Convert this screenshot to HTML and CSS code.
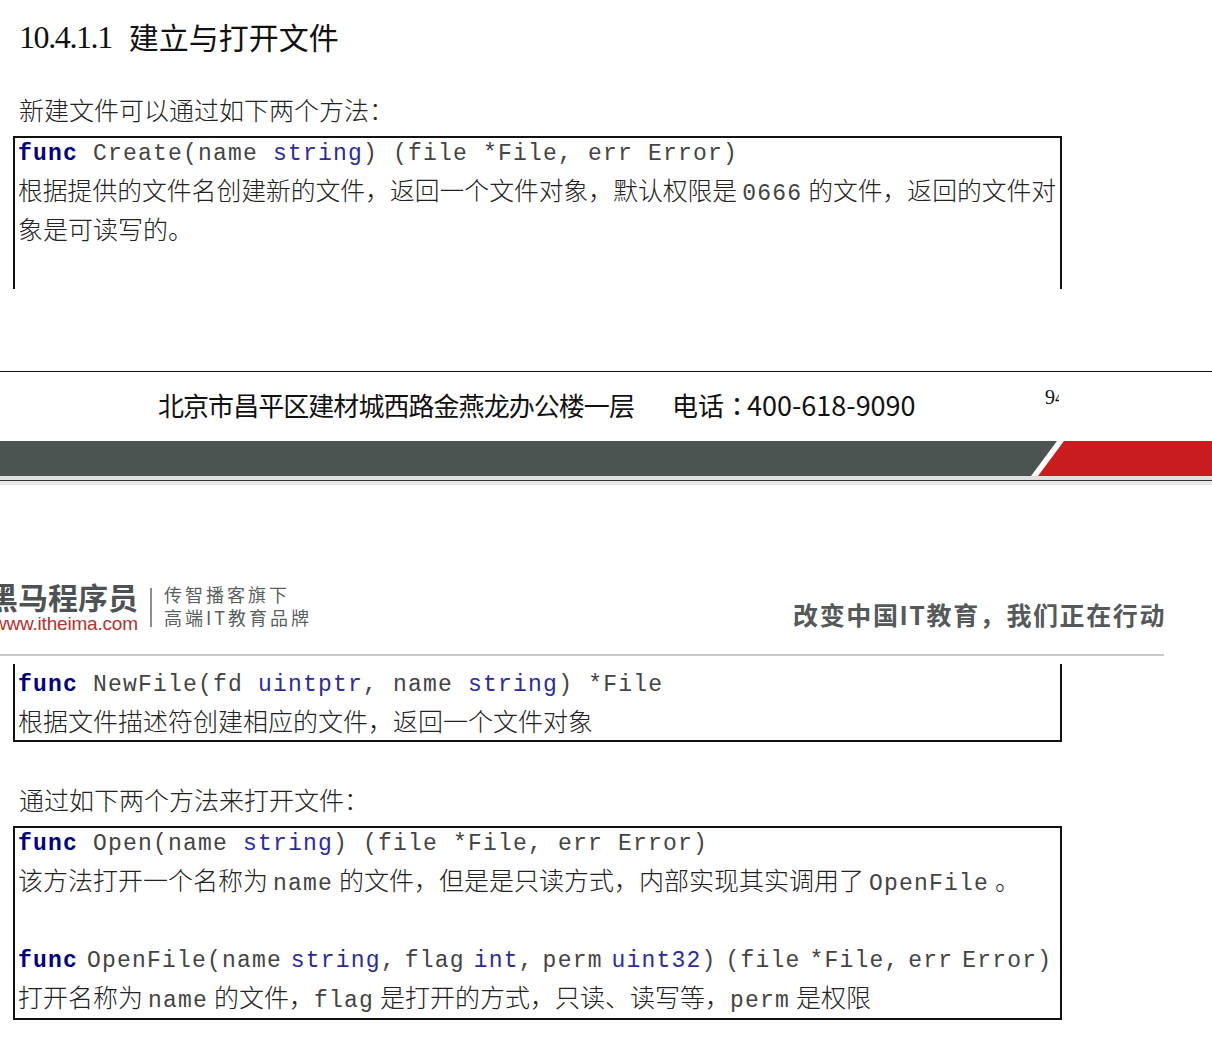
FILE: index.html
```html
<!DOCTYPE html>
<html lang="zh-CN">
<head>
<meta charset="utf-8">
<title>建立与打开文件</title>
<link rel="stylesheet" href="styles.css">
</head>
<body>
<main class="page">
  <section class="sheet-end">
    <h1 class="title"><span class="title-num">10.4.1.1</span><span>建立与打开文件</span></h1>
    <p class="para para-first">新建文件可以通过如下两个方法&#xFF1A;</p>
    <div class="box box-open-bottom">
      <div class="line"><b class="kw">func</b> Create(name <span class="ty">string</span>) (file *File, err Error)</div>
      <div class="line zh tight">根据提供的文件名创建新的文件&#xFF0C;返回一个文件对象&#xFF0C;默认权限是<span class="c">0666</span>的文件&#xFF0C;返回的文件对</div>
      <div class="line zh">象是可读写的。</div>
      <div class="line"></div>
    </div>
    <footer class="foot">
      <div class="foot-text">
        <span class="addr">北京市昌平区建材城西路金燕龙办公楼一层</span>
        <span class="tel">电话<span class="colon" lang="zh-TW">&#xFF1A;</span><span class="digits">400-618-9090</span></span>
        <span class="pageno"><span class="pageno-clip">94</span></span>
      </div>
      <svg class="band" width="1212" height="35" viewBox="0 0 1212 35" aria-hidden="true">
        <polygon points="0,0 1057,0 1031,35 0,35" fill="#4c5452"/>
        <polygon points="1064,0 1212,0 1212,35 1038,35" fill="#c91c1e"/>
      </svg>
      <div class="foot-rule"></div>
    </footer>
  </section>
  <section class="sheet-next">
    <header class="head">
      <div class="logo">
        <div class="logo-main">
          <div class="logo-name">黑马程序员</div>
          <div class="logo-url">www.itheima.com</div>
        </div>
        <div class="logo-sep"></div>
        <div class="logo-sub">
          <div>传智播客旗下</div>
          <div>高端IT教育品牌</div>
        </div>
      </div>
      <div class="slogan">改变中国IT教育&#xFF0C;我们正在行动</div>
    </header>
    <div class="box box-open-top">
      <div class="line"><b class="kw">func</b> NewFile(fd <span class="ty">uintptr</span>, name <span class="ty">string</span>) *File</div>
      <div class="line zh">根据文件描述符创建相应的文件&#xFF0C;返回一个文件对象</div>
    </div>
    <p class="para para-second">通过如下两个方法来打开文件&#xFF1A;</p>
    <div class="box box-last">
      <div class="line"><b class="kw">func</b> Open(name <span class="ty">string</span>) (file *File, err Error)</div>
      <div class="line zh">该方法打开一个名称为<span class="c">name</span>的文件&#xFF0C;但是是只读方式&#xFF0C;内部实现其实调用了<span class="c">OpenFile</span>。</div>
      <div class="line"></div>
      <div class="line narrow"><b class="kw">func</b> OpenFile(name <span class="ty">string</span>, flag <span class="ty">int</span>, perm <span class="ty">uint32</span>) (file *File, err Error)</div>
      <div class="line zh">打开名称为<span class="c">name</span>的文件&#xFF0C;<span class="c c-flush">flag</span>是打开的方式&#xFF0C;只读、读写等&#xFF0C;<span class="c c-flush">perm</span>是权限</div>
    </div>
  </section>
</main>
</body>
</html>
```
FILE: styles.css
```css
html, body { margin: 0; padding: 0; background: #fff; }
body { width: 1212px; height: 1047px; overflow: hidden; }
.page { font-family: "Noto Sans CJK SC", sans-serif; color: #222; }
.sheet-end { height: 484px; }
.title { margin: 0; padding: 14px 0 0 19px; height: 44px; display: flex; align-items: center; gap: 17px;
  font-size: 30px; line-height: 44px; font-weight: 400; color: #111; }
.title-num { font-family: "Liberation Serif", serif; font-size: 32px; letter-spacing: -1.4px; padding-top: 2px; }
.para { margin: 0; padding-left: 19px; font-size: 25px; line-height: 39px; font-weight: 300; }
.para-first { padding-top: 32px; height: 46px; }
.para-second { padding-top: 38px; height: 46px; }
.box { margin-left: 13px; width: 1042px; border: 2px solid #111; padding: 0 0 0 3px; }
.box-open-bottom { border-bottom: 0; height: 151px; }
.box-open-top { border-top: 0; margin-top: 8px; padding-top: 5px; }
.box-open-top .line:last-child { height: 32px; }
.box-last .line:last-child { height: 34px; }
.line { height: 39px; line-height: 33px; white-space: nowrap; font-family: "Liberation Mono", monospace;
  font-size: 23px; letter-spacing: 1.2px; color: #444; }
.line.zh { font-family: "Noto Sans CJK SC", sans-serif; font-size: 25px; letter-spacing: 0; line-height: 25px; font-weight: 300; color: #222; }
.line.tight { font-size: 24.8px; }
.line.narrow { word-spacing: -6.1px; }
.kw { color: #000080; font-weight: 700; }
.ty { color: #2b2b9c; }
.c { font-family: "Liberation Mono", monospace; font-size: 23px; letter-spacing: 1.2px; margin: 0 6px 0 5px; font-weight: 400; color: #444; }
.c-flush { margin-left: 0; }
.foot { margin-top: 82px; border-top: 1px solid #111; }
.foot-text { height: 65px; padding: 0 0 4px 158px; display: flex; align-items: center; position: relative; color: #111; }
.addr { font-size: 26px; letter-spacing: -0.95px; }
.tel { margin-left: 38px; font-size: 26px; }
.colon { font-family: "Noto Sans CJK TC", sans-serif; margin-right: -3px; }
.digits { font-size: 27px; }
.pageno { position: absolute; left: 1045px; top: 12px; width: 14px; overflow: hidden; font-family: "Liberation Serif", serif; font-size: 20px; line-height: 26px; }
.band { display: block; }
.foot-rule { height: 4px; background: #e0e0e0; border-bottom: 1px solid #333; box-shadow: 0 4px 0 #e8e8e8; }
.head { height: 172px; position: relative; border-bottom: 2px solid #c8c8c8; width: 1164px; display: flex; justify-content: space-between; align-items: flex-end; box-sizing: border-box; padding: 0 0 20px 0; }
.logo { display: flex; align-items: center; margin-left: -7px; }
.logo-main { width: 146px; }
.logo-name { font-size: 30px; line-height: 32px; font-weight: 700; color: #4d5352; white-space: nowrap; margin-left: -5px; }
.logo-url { font-family: "Liberation Sans", sans-serif; font-size: 19px; line-height: 20px; color: #b5302e; white-space: nowrap; margin-top: 2px; letter-spacing: -0.2px; margin-left: 0; }
.logo-sep { width: 2px; height: 39px; background: #8a8f8e; margin: 0 12px 0 11px; }
.logo-sub { font-size: 18px; line-height: 23px; letter-spacing: 3px; color: #5a5f5e; white-space: nowrap; margin-top: -2px; }
.slogan { font-size: 25px; font-weight: 700; line-height: 30px; color: #55595a; white-space: nowrap; letter-spacing: 1.6px; margin: 0 -2px 5px 0; }
```
